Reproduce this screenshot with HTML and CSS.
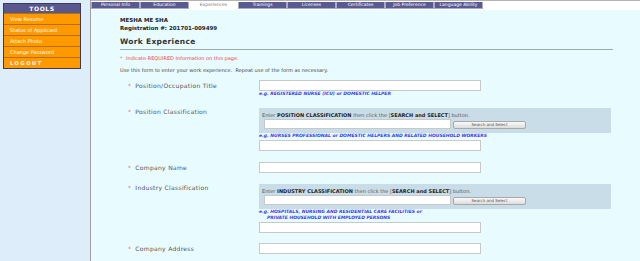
FILE: index.html
```html
<!DOCTYPE html>
<html lang="en">

<head>
    <meta charset="UTF-8">
    <meta name="viewport" content="width=device-width, initial-scale=1.0">
    <title>Work Experience</title>
    <link rel="stylesheet" href="styles.css">
</head>

<body>

    <div class="page">
        <aside class="sidebar">
            <div class="tools">
                <div class="tools-head">TOOLS</div>
                <a class="tool" href="#">View Resume</a>
                <a class="tool" href="#">Status of Applicant</a>
                <a class="tool" href="#">Attach Photo</a>
                <a class="tool" href="#">Change Password</a>
                <a class="tool logout" href="#">LOGOUT</a>
            </div>
        </aside>

        <main class="main">
            <nav class="tabs">
                <a class="tab" href="#">Personal Info</a>
                <a class="tab" href="#">Education</a>
                <a class="tab active" href="#">Experiences</a>
                <a class="tab" href="#">Trainings</a>
                <a class="tab" href="#">Licenses</a>
                <a class="tab" href="#">Certificates</a>
                <a class="tab" href="#">Job Preference</a>
                <a class="tab" href="#">Language Ability</a>
            </nav>

            <div class="content">
                <div class="applicant">MESHA ME SHA</div>
                <div class="applicant">Registration #: 201701-009499</div>

                <h2 class="title">Work Experience</h2>

                <p class="required-note"><span class="star">*</span> Indicate REQUIRED Information on this page.</p>
                <p class="intro">Use this form to enter your work experience.&nbsp; Repeat use of the form as necessary.</p>

                <div class="row">
                    <label class="label"><span class="star">*</span>Position/Occupation Title</label>
                    <div class="field">
                        <input class="text" type="text">
                        <div class="hint">e.g. REGISTERED NURSE (ICU) or DOMESTIC HELPER</div>
                    </div>
                </div>

                <div class="row gap-big">
                    <label class="label boxed"><span class="star">*</span>Position Classification</label>
                    <div class="field">
                        <div class="search-box">
                            <div class="search-note">Enter <b>POSITION CLASSIFICATION</b> then click the [<b>SEARCH and SELECT</b>] button.</div>
                            <div class="search-line">
                                <input class="search-input" type="text">
                                <button class="search-btn" type="button">Search and Select</button>
                            </div>
                        </div>
                        <div class="hint">e.g. NURSES PROFESSIONAL or DOMESTIC HELPERS AND RELATED HOUSEHOLD WORKERS</div>
                        <input class="text after-hint" type="text">
                    </div>
                </div>

                <div class="row gap-big">
                    <label class="label"><span class="star">*</span>Company Name</label>
                    <div class="field">
                        <input class="text" type="text">
                    </div>
                </div>

                <div class="row gap-big">
                    <label class="label boxed"><span class="star">*</span>Industry Classification</label>
                    <div class="field">
                        <div class="search-box">
                            <div class="search-note">Enter <b>INDUSTRY CLASSIFICATION</b> then click the [<b>SEARCH and SELECT</b>] button.</div>
                            <div class="search-line">
                                <input class="search-input" type="text">
                                <button class="search-btn" type="button">Search and Select</button>
                            </div>
                        </div>
                        <div class="hint">e.g. HOSPITALS, NURSING AND RESIDENTIAL CARE FACILITIES or<br><span class="indent">PRIVATE HOUSEHOLD WITH EMPLOYED PERSONS</span></div>
                        <input class="text after-hint" type="text">
                    </div>
                </div>

                <div class="row gap-mid">
                    <label class="label"><span class="star">*</span>Company Address</label>
                    <div class="field">
                        <input class="text" type="text">
                    </div>
                </div>
            </div>
        </main>
    </div>

</body>

</html>
```

FILE: styles.css
```css
body {
    margin: 0;
    font-family: "DejaVu Sans", Verdana, sans-serif;
    color: #333;
    background-color: #e8fbff;
}

.page {
    display: flex;
    height: 100vh;
    overflow: hidden;
}

/* left tools column */
.sidebar {
    width: 90px;
    flex-shrink: 0;
    background-color: #ddedfa;
    border-right: 1px solid #a0a0a0;
}

.tools {
    width: 76px;
    margin: 3px 0 0 3px;
    border: 1px solid #3c3c5a;
    background-color: #ff9900;
}

.tools-head {
    height: 9px;
    line-height: 9px;
    text-align: center;
    background-color: #58588f;
    color: #fff;
    font-size: 6px;
    font-weight: bold;
    letter-spacing: 0.6px;
}

.tool {
    display: block;
    height: 10px;
    line-height: 10px;
    padding-left: 6px;
    border-top: 1px solid #b86e00;
    color: #fff;
    font-size: 5px;
    text-decoration: none;
}

.logout {
    font-weight: bold;
    letter-spacing: 1.6px;
}

/* tabs strip */
.main {
    flex: 1;
}

.tabs {
    display: flex;
    height: 8px;
    padding-top: 1px;
    border-top: 1px solid #b4b4b4;
    background-color: #fff;
}

.tab {
    width: 47px;
    height: 6px;
    line-height: 6px;
    border: 1px solid #a8a8c8;
    border-top: none;
    background-color: #5a5a92;
    color: #fff;
    font-size: 4.5px;
    text-align: center;
    text-decoration: none;
}

.tab.active {
    background-color: #fff;
    border-color: #fff;
    color: #777;
}

/* form area */
.content {
    padding: 6px 0 0 29px;
}

.applicant {
    font-size: 5.5px;
    line-height: 8px;
    font-weight: bold;
    color: #222;
}

.title {
    width: 493px;
    margin: 4px 0 0;
    padding-bottom: 2px;
    border-bottom: 1px solid #9aaaa6;
    font-size: 7.5px;
    line-height: 11px;
    font-weight: bold;
    color: #333;
    letter-spacing: 0.3px;
}

.required-note,
.intro {
    margin: 4px 0 0;
    font-size: 5px;
    line-height: 8px;
}

.required-note {
    color: #ee4444;
}

.intro {
    color: #444;
}

.required-note .star {
    margin-right: 2px;
}

.row {
    display: flex;
    margin-top: 6px;
}

.row.gap-big {
    margin-top: 11px;
}

.row.gap-mid {
    margin-top: 10px;
}

.label {
    width: 131px;
    flex-shrink: 0;
    padding-left: 8px;
    font-size: 6px;
    line-height: 11px;
    color: #555;
    letter-spacing: 0.3px;
}

.label.boxed {
    line-height: 8px;
}

.star {
    color: #f07070;
    margin-right: 4px;
}

.field {
    display: flex;
    flex-direction: column;
    align-items: flex-start;
}

.text {
    box-sizing: border-box;
    width: 222px;
    height: 11px;
    margin: 0;
    padding: 0;
    border: 1px solid #c8c8c8;
    background-color: #fff;
}

.text.after-hint {
    margin-top: 1px;
}

.hint {
    font-size: 4.5px;
    line-height: 6px;
    font-style: italic;
    font-weight: bold;
    color: #3a3af0;
}

.indent {
    padding-left: 8px;
}

.search-box {
    box-sizing: border-box;
    width: 352px;
    height: 25px;
    padding: 3px 0 0 3px;
    background-color: #c9dde9;
}

.search-note {
    font-size: 5px;
    line-height: 8px;
    color: #555;
}

.search-note b {
    color: #222;
}

.search-line {
    display: flex;
    align-items: center;
    gap: 2px;
    padding-left: 2px;
}

.search-input {
    box-sizing: border-box;
    width: 187px;
    height: 10px;
    margin: 0;
    padding: 0;
    border: 1px solid #c8c8c8;
    background-color: #fff;
}

.search-btn {
    box-sizing: border-box;
    width: 73px;
    height: 8px;
    margin: 1px 0 0;
    padding: 0;
    border: 1px solid #a8a8a8;
    border-radius: 2px;
    background: linear-gradient(#fafafa, #dcdcdc);
    color: #555;
    font-family: "DejaVu Sans", Verdana, sans-serif;
    font-size: 4px;
    line-height: 6px;
    cursor: pointer;
}
```
